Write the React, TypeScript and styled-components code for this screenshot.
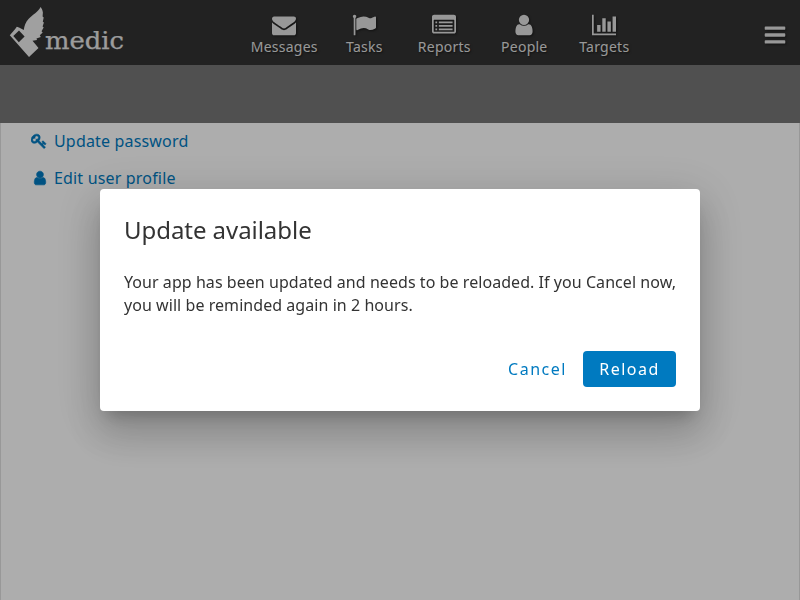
import React from 'react';
import styled, { createGlobalStyle } from 'styled-components';

const GlobalStyle = createGlobalStyle`
  * { box-sizing: border-box; }
  html, body, #root { height: 100%; }
  body {
    margin: 0;
    overflow: hidden;
    background: #fff;
    color: #333;
    font-family: "Noto Sans", sans-serif;
    font-size: 16px;
  }
`;

const Page = styled.div`
  height: 100vh;
  display: flex;
  flex-direction: column;
`;

const Header = styled.header`
  height: 65px;
  flex: none;
  display: grid;
  grid-template-columns: 244px 400px 1fr;
  background: #333;
  color: #e1e1e1;
`;

const Logo = styled.svg`
  display: block;
  width: 140px;
  height: 65px;
`;

const Wordmark = styled.text`
  font-family: "DejaVu Serif", serif;
  font-size: 24.5px;
  fill: #e6e6e6;
  stroke: #e6e6e6;
  stroke-width: 0.25px;
`;

const Tabs = styled.nav`
  display: grid;
  grid-template-columns: repeat(5, 80px);
`;

const Tab = styled.a`
  display: flex;
  flex-direction: column;
  align-items: center;
  padding-top: 13px;
  font-size: 14px;
  line-height: 20px;
  letter-spacing: 0.25px;
  text-shadow: 1px 1px 2px rgba(0, 0, 0, 0.6);
`;

const TabLabel = styled.span`
  padding-left: 0.6px;
`;

const Glyph = styled.svg<{ $size: number }>`
  display: block;
  flex: none;
  width: ${(p) => p.$size}px;
  height: ${(p) => p.$size}px;
  fill: currentColor;
`;

const NavGlyph = styled(Glyph)`
  filter: drop-shadow(1px 1px 1px rgba(0, 0, 0, 0.5));
`;

const OptionGlyph = styled(Glyph)<{ $shift: number }>`
  margin-left: ${(p) => p.$shift}px;
  margin-right: ${(p) => 7 - p.$shift}px;
  stroke: currentColor;
  stroke-width: 70px;
`;

const MenuButton = styled.div`
  justify-self: end;
  padding: 23px 12.7px 0 0;
`;

const ActionBar = styled.div`
  height: 58px;
  flex: none;
  background: #777;
`;

const Content = styled.main`
  flex: 1;
  border: solid #e0e0e0;
  border-width: 0 1px;
  padding: 0 30px;
`;

const Option = styled.a`
  display: flex;
  align-items: center;
  height: 37px;
  padding-bottom: 2px;
  letter-spacing: 0.17px;
  color: #007ac0;
`;

const Scrim = styled.div`
  position: fixed;
  inset: 0;
  display: flex;
  align-items: center;
  justify-content: center;
  background: rgba(0, 0, 0, 0.32);
`;

const Dialog = styled.section`
  width: 600px;
  height: 222px;
  padding: 24px;
  display: flex;
  flex-direction: column;
  background: #fff;
  border-radius: 4px;
  box-shadow:
    0 11px 15px -7px rgba(0, 0, 0, 0.2),
    0 24px 38px 3px rgba(0, 0, 0, 0.14),
    0 9px 46px 8px rgba(0, 0, 0, 0.12);
`;

const Title = styled.h2`
  margin: 0 0 25px;
  font-size: 24px;
  font-weight: 400;
  line-height: 33px;
  letter-spacing: -0.05px;
`;

const Message = styled.p`
  margin: 0;
  line-height: 23px;
  letter-spacing: 0.055px;
  white-space: nowrap;
`;

const Actions = styled.div`
  display: flex;
  justify-content: flex-end;
  margin-top: auto;
`;

const Button = styled.button<{ $primary?: boolean }>`
  width: ${(p) => (p.$primary ? 93 : 92)}px;
  height: 36px;
  border: 0;
  padding: 0 0 0 ${(p) => (p.$primary ? 0 : 1)}px;
  border-radius: 4px;
  font: inherit;
  letter-spacing: 1.5px;
  background: ${(p) => (p.$primary ? '#007ac0' : 'transparent')};
  color: ${(p) => (p.$primary ? '#fff' : '#007ac0')};
`;

const icons = {
  envelope:
    'M1792 710v794q0 66-47 113t-113 47h-1472q-66 0-113-47t-47-113v-794q44 49 101 87 362 246 497 345 57 42 92.5 65.5t94.5 48 110 24.5h2q51 0 110-24.5t94.5-48 92.5-65.5q170-123 498-345 57-39 100-87zm0-294q0 79-49 151t-122 123q-376 261-468 325-10 7-42.5 31t-54 38.5-52 32.5-57.5 27-50 9h-2q-23 0-50-9t-57.5-27-52-32.5-54-38.5-42.5-31q-91-64-262-182.5t-205-142.5q-62-42-117-115.5t-55-136.5q0-78 41.5-130t118.5-52h1472q65 0 112.5 47t47.5 113z',
  flag:
    'M320 256q0 72-64 110v1266q0 13-9.5 22.5t-22.5 9.5h-64q-13 0-22.5-9.5t-9.5-22.5v-1266q-64-38-64-110 0-53 37.5-90.5t90.5-37.5 90.5 37.5 37.5 90.5zm1472 64v763q0 25-12.5 38.5t-39.5 27.5q-215 116-369 116-61 0-123.5-22t-108.5-48-115.5-48-142.5-22q-192 0-464 146-17 9-33 9-26 0-45-19t-19-45v-742q0-32 31-55 21-14 79-43 236-120 421-120 107 0 200 29t219 88q38 19 88 19 54 0 117.5-21t110-47 88-47 54.5-21q26 0 45 19t19 45z',
  list:
    'M160 128h1472q66 0 113 47t47 113v1088q0 66-47 113t-113 47h-1472q-66 0-113-47t-47-113v-1088q0-66 47-113t113-47zM128 544v832q0 32 32 32h1472q32 0 32-32v-832q0-32-32-32h-1472q-32 0-32 32zM256 640h128v128h-128zM256 896h128v128h-128zM256 1152h128v128h-128zM512 640h1024v128h-1024zM512 896h1024v128h-1024zM512 1152h1024v128h-1024z',
  user:
    'M1536 1399q0 109-62.5 187t-150.5 78h-854q-88 0-150.5-78t-62.5-187q0-85 8.5-160.5t31.5-152 58.5-131 94-89 134.5-34.5q131 128 313 128t313-128q76 0 134.5 34.5t94 89 58.5 131 31.5 152 8.5 160.5zm-256-887q0 159-112.5 271.5t-271.5 112.5-271.5-112.5-112.5-271.5 112.5-271.5 271.5-112.5 271.5 112.5 112.5 271.5z',
  chart:
    'M640 896v512h-256v-512h256zm384-512v1024h-256v-1024h256zm768 1152v128h-1792v-1536h128v1408h1664zm-384-896v768h-256v-768h256zm384-384v1152h-256v-1152h256z',
  bars:
    'M192 256h1408q64 0 64 64v128q0 64-64 64h-1408q-64 0-64-64v-128q0-64 64-64zM192 768h1408q64 0 64 64v128q0 64-64 64h-1408q-64 0-64-64v-128q0-64 64-64zM192 1280h1408q64 0 64 64v128q0 64-64 64h-1408q-64 0-64-64v-128q0-64 64-64z',
  key:
    'M832 512q0-80-56-136t-136-56-136 56-56 136q0 42 19 83-41-19-83-19-80 0-136 56t-56 136 56 136 136 56 136-56 56-136q0-42-19-83 41 19 83 19 80 0 136-56t56-136zm851 704q0 17-49 66t-66 49q-9 0-28.5-16t-36.5-33-38.5-40-24.5-26l-96 96 220 220q28 28 28 68 0 42-39 81t-81 39q-40 0-68-28l-671-671q-176 131-365 131-163 0-265.5-102.5t-102.5-265.5q0-160 95-313t248-248 313-95q163 0 265.5 102.5t102.5 265.5q0 189-131 365l355 355 96-96q-3-3-26-24.5t-40-38.5-33-36.5-16-28.5q0-17 49-66t66-49q13 0 23 10 6 6 46 44.5t82 79.5 86.5 86 73 78 28.5 41z',
};

type IconName = keyof typeof icons;

const NavIcon = ({ name }: { name: IconName }) => (
  <NavGlyph $size={24} viewBox="0 0 1792 1792">
    <path fillRule="evenodd" d={icons[name]} />
  </NavGlyph>
);

const OptionIcon = ({ name, shift = 0 }: { name: IconName; shift?: number }) => (
  <OptionGlyph $size={16} $shift={shift} viewBox="0 0 1792 1792">
    <path d={icons[name]} />
  </OptionGlyph>
);

const tabs: { icon: IconName; label: string }[] = [
  { icon: 'envelope', label: 'Messages' },
  { icon: 'flag', label: 'Tasks' },
  { icon: 'list', label: 'Reports' },
  { icon: 'user', label: 'People' },
  { icon: 'chart', label: 'Targets' },
];

export default function App() {
  return (
    <>
      <GlobalStyle />
      <Page>
        <Header>
          <Logo viewBox="0 0 140 65">
            <path
              fill="#ececec"
              fillRule="evenodd"
              d="M40.500 7C38.500 12 32.500 14.500 28.500 19C25.500 22.500 24.300 25.500 23.800 30L19 27.500L16.800 26.800L15.200 29L9.800 35.300L29 57L38.500 48L32.500 40.800L37 40L36.500 38.600L40.800 37L39.800 35.300L42.700 32.500L41.500 31.200L43.700 27.500L42.600 26.600L43.900 22.500L42.800 21.800L43.700 17.500L42.600 16.500L42.900 12.500C42.600 10 41.500 8 40.500 7ZM19 30.500L24.600 36.600L18.800 42.300L13.300 36Z"
            />
            <Wordmark x="45" y="49.300" textLength="79" lengthAdjust="spacingAndGlyphs">
              medic
            </Wordmark>
          </Logo>
          <Tabs>
            {tabs.map((t) => (
              <Tab key={t.label}>
                <NavIcon name={t.icon} />
                <TabLabel>{t.label}</TabLabel>
              </Tab>
            ))}
          </Tabs>
          <MenuButton>
            <NavIcon name="bars" />
          </MenuButton>
        </Header>
        <ActionBar />
        <Content>
          <Option>
            <OptionIcon name="key" />
            Update password
          </Option>
          <Option>
            <OptionIcon name="user" shift={1} />
            Edit user profile
          </Option>
        </Content>
      </Page>
      <Scrim>
        <Dialog>
          <Title>Update available</Title>
          <Message>
            Your app has been updated and needs to be reloaded. If you Cancel now,
            <br />
            you will be reminded again in 2 hours.
          </Message>
          <Actions>
            <Button>Cancel</Button>
            <Button $primary>Reload</Button>
          </Actions>
        </Dialog>
      </Scrim>
    </>
  );
}
